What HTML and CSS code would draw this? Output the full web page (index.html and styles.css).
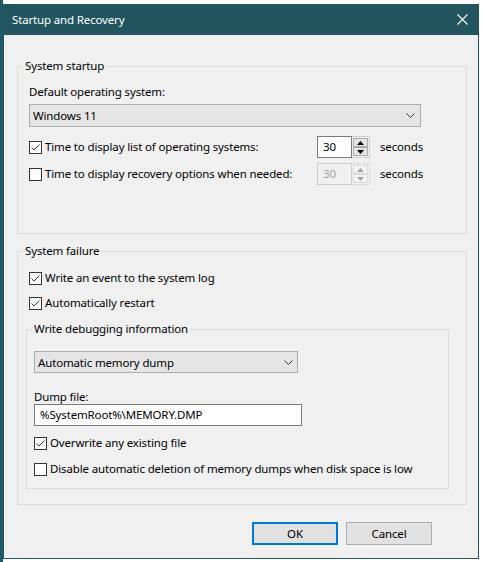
FILE: index.html
```html
<!DOCTYPE html>
<html>
<head>
<meta charset="utf-8">
<link rel="stylesheet" href="styles.css">
</head>
<body>
<div class="screen">
  <div class="dialog">
    <div class="titlebar">
      <span class="title">Startup and Recovery</span>
      <svg class="close" width="11" height="11" viewBox="0 0 11 11"><path d="M0.5 0.5L10.5 10.5M10.5 0.5L0.5 10.5" stroke="#fff" stroke-width="1.1" fill="none"/></svg>
    </div>
    <div class="content">
      <div class="group startup">
        <div class="legend">System startup</div>
        <div class="label">Default operating system:</div>
        <div class="combo os">
          <span>Windows 11</span>
          <svg width="9" height="5" viewBox="0 0 9 5"><path d="M0.5 0.5L4.5 4.5L8.5 0.5" fill="none" stroke="#333" stroke-width="1"/></svg>
        </div>
        <div class="row spin-row first">
          <div class="check wide"><span class="box"><svg width="11" height="11" viewBox="0 0 11 11"><path d="M1.5 5.5L4 8L9.5 2.5" fill="none" stroke="#333" stroke-width="1"/></svg></span>Time to display list of operating systems:</div>
          <div class="spin">
            <div class="spin-edit">30</div>
            <div class="spin-btns">
              <div class="spin-btn"><svg width="7" height="4" viewBox="0 0 7 4"><path d="M0 4L3.5 0L7 4Z" fill="#000"/></svg></div>
              <div class="spin-btn"><svg width="7" height="4" viewBox="0 0 7 4"><path d="M0 0L3.5 4L7 0Z" fill="#000"/></svg></div>
            </div>
          </div>
          <span class="unit">seconds</span>
        </div>
        <div class="row spin-row second">
          <div class="check wide"><span class="box"></span>Time to display recovery options when needed:</div>
          <div class="spin disabled">
            <div class="spin-edit">30</div>
            <div class="spin-btns">
              <div class="spin-btn"><svg width="7" height="4" viewBox="0 0 7 4"><path d="M0 4L3.5 0L7 4Z" fill="#a3a3a3"/></svg></div>
              <div class="spin-btn"><svg width="7" height="4" viewBox="0 0 7 4"><path d="M0 0L3.5 4L7 0Z" fill="#a3a3a3"/></svg></div>
            </div>
          </div>
          <span class="unit">seconds</span>
        </div>
      </div>

      <div class="group failure">
        <div class="legend">System failure</div>
        <div class="check line event"><span class="box"><svg width="11" height="11" viewBox="0 0 11 11"><path d="M1.5 5.5L4 8L9.5 2.5" fill="none" stroke="#333" stroke-width="1"/></svg></span>Write an event to the system log</div>
        <div class="check line restart"><span class="box"><svg width="11" height="11" viewBox="0 0 11 11"><path d="M1.5 5.5L4 8L9.5 2.5" fill="none" stroke="#333" stroke-width="1"/></svg></span>Automatically restart</div>

        <div class="group inner">
          <div class="legend">Write debugging information</div>
          <div class="combo dump">
            <span>Automatic memory dump</span>
            <svg width="9" height="5" viewBox="0 0 9 5"><path d="M0.5 0.5L4.5 4.5L8.5 0.5" fill="none" stroke="#333" stroke-width="1"/></svg>
          </div>
          <div class="label dumplabel">Dump file:</div>
          <div class="textbox">%SystemRoot%\MEMORY.DMP</div>
          <div class="check line overwrite"><span class="box"><svg width="11" height="11" viewBox="0 0 11 11"><path d="M1.5 5.5L4 8L9.5 2.5" fill="none" stroke="#333" stroke-width="1"/></svg></span>Overwrite any existing file</div>
          <div class="check line disable"><span class="box"></span>Disable automatic deletion of memory dumps when disk space is low</div>
        </div>
      </div>

      <div class="buttons">
        <div class="btn default">OK</div>
        <div class="btn">Cancel</div>
      </div>
    </div>
  </div>
</div>
</body>
</html>
```
FILE: styles.css
```css
* { box-sizing: border-box; }
html, body { margin: 0; padding: 0; }
body {
  width: 482px;
  height: 562px;
  overflow: hidden;
  background: #fff;
  font-family: "Noto Sans", "Segoe UI", sans-serif;
  font-size: 11.5px;
  letter-spacing: -0.15px;
  color: #000;
}
.screen {
  height: 562px;
  padding: 4px 0 0 3px;
  background: linear-gradient(to right, #1f5866 0, #1f5866 3px, #fff 3px);
}
.dialog {
  width: 476px;
  height: 555px;
  border: 1px solid #235561;
  border-top: 0;
  background: #f0f0f0;
  display: flex;
  flex-direction: column;
}
.titlebar {
  height: 31px;
  margin: 0 -1px;
  background: #235561;
  color: #fff;
  display: flex;
  align-items: center;
  justify-content: space-between;
  padding: 0 11px 0 9px;
}
.title { line-height: 16px; }
.close { display: block; }

.content {
  padding-left: 13px;
  display: flex;
  flex-direction: column;
}
.group {
  border: 1px solid #dcdcdc;
  padding: 0 11px;
  display: flex;
  flex-direction: column;
  align-items: flex-start;
}
.legend {
  margin: -9px 0 0 -6px;
  padding: 0 2px;
  height: 16px;
  line-height: 16px;
  background: #f0f0f0;
}
.startup { width: 450px; margin-top: 31px; padding-bottom: 48px; }
.failure { width: 450px; margin-top: 17px; padding-bottom: 15px; }
.inner {
  width: 423px;
  margin: 18px 0 0 -3px;
  padding: 0 7px 11px;
}
.inner .legend { margin-left: -2px; }

.label { line-height: 16px; height: 16px; margin-top: 10px; }
.dumplabel { margin-top: 16px; height: 15px; line-height: 15px; }

.combo {
  display: flex;
  align-items: center;
  justify-content: space-between;
  border: 1px solid #adadad;
  background: #e5e5e5;
  padding: 0 5px 0 3px;
}
.combo svg { display: block; }
.os { width: 392px; height: 23px; margin-top: 4px; }
.dump { width: 264px; height: 22px; margin-top: 14px; padding-right: 4px; }

.row { display: flex; align-items: center; }
.spin-row { height: 22px; }
.first { margin-top: 9px; }
.second { margin-top: 5px; }

.check {
  display: flex;
  align-items: center;
  gap: 3px;
  line-height: 16px;
  height: 16px;
  white-space: nowrap;
}
.wide { width: 288px; }
.box {
  width: 13px;
  height: 13px;
  border: 1px solid #333;
  background: #fff;
  flex: none;
}
.box svg { display: block; }
.event { margin-top: 11px; }
.restart { margin-top: 9px; }
.overwrite { margin-top: 9px; }
.disable { margin-top: 10px; }

.spin { display: flex; width: 53px; height: 22px; }
.spin-edit {
  width: 35px;
  border: 1px solid #7a7a7a;
  background: #fff;
  padding-left: 5px;
  line-height: 20px;
}
.spin-btns {
  width: 18px;
  border: 1px solid #cfcfcf;
  border-left: 0;
  padding: 1px;
  display: flex;
  flex-direction: column;
}
.spin-btn {
  flex: 1;
  border: 1px solid #adadad;
  background: #e5e5e5;
  display: flex;
  align-items: center;
  justify-content: center;
}
.spin-btn svg { display: block; }
.disabled .spin-edit { border-color: #cccccc; background: #f0f0f0; color: #a3a3a3; }
.disabled .spin-btns { border-color: #dcdcdc; }
.disabled .spin-btn { border-color: #d9d9d9; background: #f4f4f4; }
.unit { margin-left: 10px; line-height: 16px; }

.textbox {
  width: 268px;
  height: 22px;
  border: 1px solid #7a7a7a;
  background: #fff;
  padding-left: 5px;
  line-height: 20px;
}

.buttons {
  display: flex;
  justify-content: flex-end;
  gap: 8px;
  margin-top: 17px;
  padding-right: 46px;
}
.btn {
  width: 86px;
  height: 23px;
  border: 1px solid #adadad;
  background: #e1e1e1;
  display: flex;
  align-items: center;
  justify-content: center;
  line-height: 16px;
}
.btn.default { border: 2px solid #0078d7; }
```
